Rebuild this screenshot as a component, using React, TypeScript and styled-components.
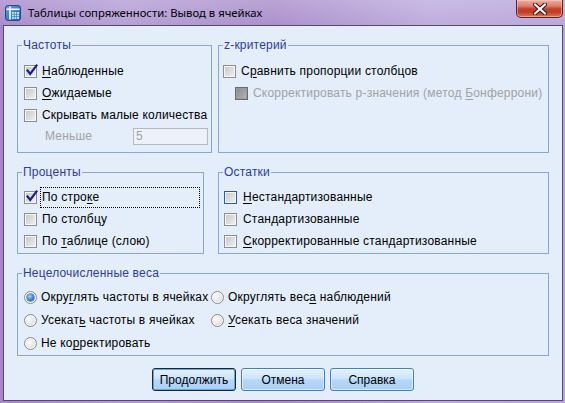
import React from 'react';
import styled, { createGlobalStyle, css } from 'styled-components';

const GlobalStyle = createGlobalStyle`
  html, body { margin: 0; padding: 0; }
  body {
    font-family: "Liberation Sans", Arial, sans-serif;
    font-size: 12px;
    color: #000;
    background: #fff;
    overflow: hidden;
  }
  * { box-sizing: border-box; }
`;

const Window = styled.div`
  width: 565px;
  height: 403px;
  display: flex;
  flex-direction: column;
  background: linear-gradient(90deg, #a487c9 0%, #b29bd4 22%, #a68ac9 48%, #bba8dc 76%, #b7a3d9 100%);
  overflow: hidden;
`;

const TitleBar = styled.div`
  height: 25px;
  flex: none;
  display: flex;
  align-items: flex-start;
  padding-left: 5px;
  background: linear-gradient(180deg, rgba(255, 255, 255, 0.22) 0%, rgba(255, 255, 255, 0.06) 100%);
`;

const AppIcon = styled.svg`
  width: 16px;
  height: 16px;
  margin-top: 5px;
  flex: none;
`;

const TitleText = styled.div`
  margin-left: 7px;
  margin-top: 5px;
  font-family: "Noto Sans", "Open Sans", sans-serif;
  font-size: 11.3px;
  line-height: 16px;
  color: #000;
  white-space: nowrap;
`;

const CloseButton = styled.div`
  margin-left: auto;
  margin-right: 2px;
  width: 47px;
  height: 18px;
  flex: none;
  display: flex;
  align-items: center;
  justify-content: center;
  border: 1px solid #5a2424;
  border-top: none;
  border-radius: 0 0 5px 5px;
  background: linear-gradient(180deg, #eab0a4 0%, #dd7f6c 35%, #c5402a 52%, #c13a23 70%, #e0745a 100%);
  box-shadow: inset 0 0 0 1px rgba(255, 220, 210, 0.45);
`;

const Client = styled.div`
  flex: 1;
  margin: 0 2px 2px 3px;
  border: 1px solid #56486f;
  background: #e3eefa;
  padding: 12px 13px 0 13px;
  display: flex;
  flex-direction: column;
  letter-spacing: 0.2px;
`;

const GroupRow = styled.div<{ $gap: number; $top?: number }>`
  display: flex;
  align-items: stretch;
  gap: ${p => p.$gap}px;
  margin-top: ${p => p.$top ?? 0}px;
`;

const Group = styled.fieldset<{ $width?: number }>`
  margin: 0;
  padding: 0;
  min-width: 0;
  border: 1px solid #87a8d7;
  width: ${p => (p.$width ? `${p.$width}px` : 'auto')};
  flex: ${p => (p.$width ? 'none' : '1')};
`;

const Legend = styled.legend`
  margin-left: 4px;
  padding: 0 1px;
  line-height: 14px;
  font-size: 12px;
  color: #2e3c9a;
`;

const GroupBody = styled.div<{ $pad: string }>`
  padding: ${p => p.$pad};
  display: flex;
  flex-direction: column;
`;

const OptionRow = styled.div<{ $h: number; $indent?: number }>`
  height: ${p => p.$h}px;
  display: flex;
  align-items: center;
  padding-left: ${p => p.$indent ?? 0}px;
  white-space: nowrap;
`;

const RadioGrid = styled.div`
  display: grid;
  grid-template-columns: 187px 1fr;
  grid-auto-rows: 23px;
  align-items: center;
`;

const RadioCell = styled.div`
  display: flex;
  align-items: center;
  white-space: nowrap;
`;

const Box = styled.span<{ $disabled?: boolean; $focus?: boolean }>`
  position: relative;
  width: 13px;
  height: 13px;
  flex: none;
  border: 1px solid ${p => (p.$focus ? '#2f55b8' : p.$disabled ? '#6c6c6c' : '#8d8e8e')};
  background: ${p =>
    p.$disabled
      ? 'linear-gradient(135deg, #8a8a8a 0%, #a3a3a3 60%, #b8b8b8 100%)'
      : 'linear-gradient(135deg, #c6c6c6 0%, #dedede 55%, #f3f3f3 100%)'};
  box-shadow: inset 0 0 0 1px ${p => (p.$disabled ? '#9a9a9a' : '#f7f7f7')};
`;

const CheckMark = styled.svg`
  position: absolute;
  left: 0px;
  top: -2px;
  width: 13px;
  height: 13px;
  overflow: visible;
`;

const RadioDot = styled.span<{ $checked?: boolean }>`
  position: relative;
  width: 13px;
  height: 13px;
  flex: none;
  border-radius: 50%;
  border: 1px solid #8a8b8b;
  background: radial-gradient(circle at 40% 40%, #fbfbfb 0%, #e6e6e6 50%, #c9c9c9 100%);
  box-shadow: inset 0 0 0 1px #ffffff;
  ${p =>
    p.$checked &&
    css`
      &::after {
        content: '';
        position: absolute;
        left: 2px;
        top: 2px;
        width: 7px;
        height: 7px;
        border-radius: 50%;
        background: radial-gradient(circle at 40% 35%, #b6e0ff 0%, #3e8ee0 45%, #1550b0 100%);
        box-shadow: 0 0 0 0.5px #1b4590;
      }
    `}
`;

const Caption = styled.span<{ $disabled?: boolean; $focus?: boolean; $gap?: number }>`
  margin-left: ${p => p.$gap ?? 3}px;
  padding: 0 1px;
  border: 1px solid transparent;
  line-height: 17px;
  white-space: nowrap;
  color: ${p => (p.$disabled ? '#a2a2a2' : '#000')};
  ${p =>
    p.$focus &&
    css`
      flex: 1;
      height: 21px;
      line-height: 19px;
      border: 1px dotted #000;
    `}
`;

const Key = styled.u`
  text-decoration: underline;
  text-underline-offset: 2px;
`;

const NumberField = styled.input`
  margin-left: auto;
  width: 75px;
  height: 17px;
  border: 1px solid #b4b9c2;
  background: #edf2f9;
  color: #a0a0a0;
  font: inherit;
  font-size: 12px;
  padding: 0 2px;
  outline: none;
`;

const ButtonBar = styled.div`
  margin-top: 12px;
  display: flex;
  justify-content: center;
  gap: 5px;
  letter-spacing: 0;
`;

const Button = styled.button<{ $primary?: boolean }>`
  width: 84px;
  height: 23px;
  padding: 0;
  font: inherit;
  font-size: 12px;
  color: #000;
  border: 1px solid ${p => (p.$primary ? '#262626' : '#3f7fc4')};
  border-radius: 3px;
  background: linear-gradient(180deg, #e4f1fd 0%, #cde4fb 45%, #b6d8f8 52%, #a9d0f6 100%);
  box-shadow: inset 0 0 0 1px ${p => (p.$primary ? '#63a6e6' : 'rgba(255,255,255,0.55)')};
`;

type CheckProps = {
  checked?: boolean;
  disabled?: boolean;
  focusBox?: boolean;
  focusText?: boolean;
  gap?: number;
  children: React.ReactNode;
};

const Check = ({ checked, disabled, focusBox, focusText, gap, children }: CheckProps) => (
  <>
    <Box $disabled={disabled} $focus={focusBox}>
      {checked && (
        <CheckMark viewBox="0 0 13 13">
          <path d="M2.5 6.5 L5.2 10 L11.5 1.5" fill="none" stroke="#1b1f86" strokeWidth="2.2" strokeLinecap="square" />
        </CheckMark>
      )}
    </Box>
    <Caption $disabled={disabled} $focus={focusText} $gap={gap}>
      {children}
    </Caption>
  </>
);

const Radio = ({ checked, children }: { checked?: boolean; children: React.ReactNode }) => (
  <RadioCell>
    <RadioDot $checked={checked} />
    <Caption $gap={2}>{children}</Caption>
  </RadioCell>
);

export default function App() {
  return (
    <>
      <GlobalStyle />
      <Window>
        <TitleBar>
          <AppIcon viewBox="0 0 16 16">
            <defs>
              <linearGradient id="ig" x1="0" y1="0" x2="1" y2="1">
                <stop offset="0" stopColor="#5aa7e8" />
                <stop offset="1" stopColor="#1c5aa8" />
              </linearGradient>
            </defs>
            <rect x="0.5" y="0.5" width="15" height="15" rx="2.5" fill="url(#ig)" stroke="#1d4f8f" strokeWidth="1" />
            <rect x="1.5" y="3.5" width="13" height="1.6" fill="#ffffff" />
            <rect x="4.2" y="1.5" width="1.6" height="13" fill="#ffffff" />
            <rect x="7" y="7" width="7" height="7" fill="#cfe6fb" />
            <path d="M7 9.3 H14 M7 11.6 H14 M9.3 7 V14 M11.6 7 V14" stroke="#3a7cc6" strokeWidth="0.8" />
          </AppIcon>
          <TitleText>Таблицы сопряженности: Вывод в ячейках</TitleText>
          <CloseButton>
            <svg width="14" height="12" viewBox="0 0 14 12">
              <path d="M2 1.5 L12 10.5 M12 1.5 L2 10.5" stroke="#3a1414" strokeWidth="4.2" strokeLinecap="round" />
              <path d="M2 1.5 L12 10.5 M12 1.5 L2 10.5" stroke="#ffffff" strokeWidth="2.2" strokeLinecap="round" />
            </svg>
          </CloseButton>
        </TitleBar>

        <Client>
          <GroupRow $gap={6}>
            <Group $width={195}>
              <Legend>Частоты</Legend>
              <GroupBody $pad="8px 3px 6px 6px">
                <OptionRow $h={22}>
                  <Check checked>
                    <Key>Н</Key>аблюденные
                  </Check>
                </OptionRow>
                <OptionRow $h={22}>
                  <Check>
                    <Key>О</Key>жидаемые
                  </Check>
                </OptionRow>
                <OptionRow $h={22}>
                  <Check>Скрывать малые количества</Check>
                </OptionRow>
                <OptionRow $h={20} $indent={16}>
                  <Caption $disabled>Меньше</Caption>
                  <NumberField disabled defaultValue="5" />
                </OptionRow>
              </GroupBody>
            </Group>

            <Group>
              <Legend>z-критерий</Legend>
              <GroupBody $pad="8px 4px 0 4px">
                <OptionRow $h={22}>
                  <Check>
                    С<Key>р</Key>авнить пропорции столбцов
                  </Check>
                </OptionRow>
                <OptionRow $h={22} $indent={12}>
                  <Check disabled>
                    Скорректировать p-значения (метод <Key>Б</Key>онферрони)
                  </Check>
                </OptionRow>
              </GroupBody>
            </Group>
          </GroupRow>

          <GroupRow $gap={14} $top={12}>
            <Group $width={187}>
              <Legend>Проценты</Legend>
              <GroupBody $pad="7px 3px 1px 6px">
                <OptionRow $h={22}>
                  <Check checked focusText>
                    По стро<Key>к</Key>е
                  </Check>
                </OptionRow>
                <OptionRow $h={22}>
                  <Check>По столбцу</Check>
                </OptionRow>
                <OptionRow $h={22}>
                  <Check>
                    По <Key>т</Key>аблице (слою)
                  </Check>
                </OptionRow>
              </GroupBody>
            </Group>

            <Group>
              <Legend>Остатки</Legend>
              <GroupBody $pad="7px 4px 1px 5px">
                <OptionRow $h={22}>
                  <Check focusBox gap={4}>
                    <Key>Н</Key>естандартизованные
                  </Check>
                </OptionRow>
                <OptionRow $h={22}>
                  <Check gap={4}>
                    Стан<Key>д</Key>артизованные
                  </Check>
                </OptionRow>
                <OptionRow $h={22}>
                  <Check gap={4}>
                    <Key>С</Key>корректированные стандартизованные
                  </Check>
                </OptionRow>
              </GroupBody>
            </Group>
          </GroupRow>

          <GroupRow $gap={0} $top={12}>
            <Group>
              <Legend>Нецелочисленные веса</Legend>
              <GroupBody $pad="6px 4px 0 6px">
                <RadioGrid>
                  <Radio checked>
                    Окру<Key>г</Key>лять частоты в ячейках
                  </Radio>
                  <Radio>
                    Округлять вес<Key>а</Key> наблюдений
                  </Radio>
                  <Radio>
                    Усекат<Key>ь</Key> частоты в ячейках
                  </Radio>
                  <Radio>
                    <Key>У</Key>секать веса значений
                  </Radio>
                  <Radio>
                    Не ко<Key>р</Key>ректировать
                  </Radio>
                </RadioGrid>
              </GroupBody>
            </Group>
          </GroupRow>

          <ButtonBar>
            <Button $primary>Продолжить</Button>
            <Button>Отмена</Button>
            <Button>Справка</Button>
          </ButtonBar>
        </Client>
      </Window>
    </>
  );
}
